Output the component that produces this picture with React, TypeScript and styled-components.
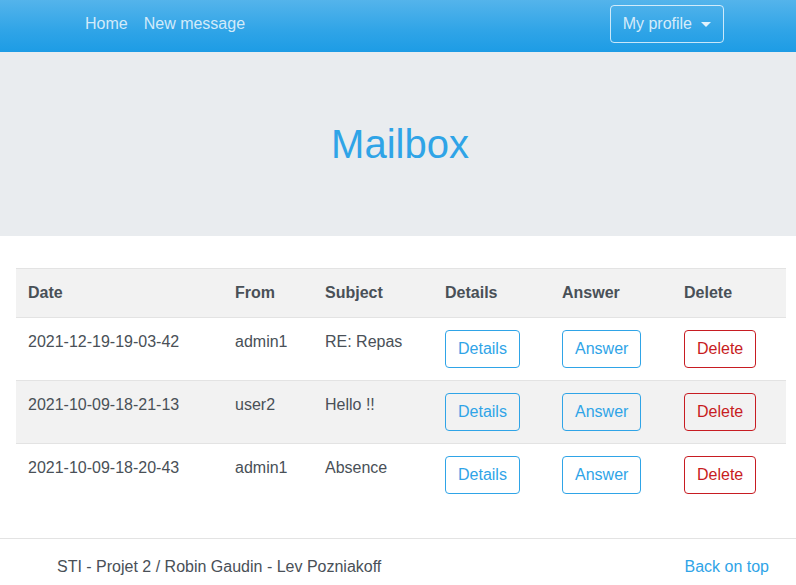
import React from "react";
import styled, { createGlobalStyle } from "styled-components";

const GlobalStyle = createGlobalStyle`
  * { box-sizing: border-box; }
  body {
    margin: 0;
    font-family: "Liberation Sans", Arial, sans-serif;
    font-size: 16px;
    line-height: 1.5;
    color: #495057;
    background: #fff;
  }
`;

const NavBar = styled.nav`
  height: 52px;
  display: flex;
  align-items: center;
  justify-content: space-between;
  padding: 0 72px 4px 77px;
  background-image: linear-gradient(#54b4eb, #2fa4e7 60%, #1d9ce5);
`;

const NavLinks = styled.div`
  display: flex;
`;

const NavLink = styled.a`
  padding: 8px;
  color: rgba(255, 255, 255, 0.78);
  text-decoration: none;
  line-height: 24px;
`;

const ProfileButton = styled.button`
  display: flex;
  align-items: center;
  height: 38px;
  padding: 6px 12px;
  font: inherit;
  color: rgba(255, 255, 255, 0.8);
  background: transparent;
  border: 1px solid rgba(255, 255, 255, 0.75);
  border-radius: 4px;
  &::after {
    content: "";
    margin-left: 9px;
    border-top: 5px solid rgba(255, 255, 255, 0.85);
    border-left: 5px solid transparent;
    border-right: 5px solid transparent;
  }
`;

const Jumbotron = styled.header`
  height: 184px;
  padding-left: 4px;
  background: #e9ecef;
  display: flex;
  align-items: center;
  justify-content: center;
`;

const Title = styled.h1`
  margin: 0;
  font-size: 40px;
  font-weight: 400;
  color: #2fa4e7;
`;

const Main = styled.main`
  padding: 32px 10px 32px 16px;
`;

const Table = styled.table`
  width: 770px;
  border-collapse: collapse;
  table-layout: fixed;
`;

const Th = styled.th<{ $w: number }>`
  width: ${(p) => p.$w}px;
  padding: 12px;
  text-align: left;
  font-weight: 700;
  line-height: 24px;
  background: #f2f2f2;
  border-top: 1px solid #e3e3e3;
`;

const Row = styled.tr<{ $striped: boolean }>`
  background: ${(p) => (p.$striped ? "#f2f2f2" : "#fff")};
`;

const Td = styled.td`
  padding: 12px;
  vertical-align: top;
  line-height: 24px;
  border-top: 1px solid #e3e3e3;
`;

const OutlineButton = styled.button<{ $color: string }>`
  height: 38px;
  padding: 6px 12px;
  font: inherit;
  color: ${(p) => p.$color};
  background: transparent;
  border: 1px solid ${(p) => p.$color};
  border-radius: 4px;
`;

const Footer = styled.footer`
  border-top: 1px solid #e3e3e3;
  display: flex;
  justify-content: space-between;
  padding: 16px 27px 20px 57px;
  line-height: 24px;
`;

const BackLink = styled.a`
  color: #2fa4e7;
  text-decoration: none;
`;

const messages = [
  { date: "2021-12-19-19-03-42", from: "admin1", subject: "RE: Repas" },
  { date: "2021-10-09-18-21-13", from: "user2", subject: "Hello !!" },
  { date: "2021-10-09-18-20-43", from: "admin1", subject: "Absence" },
];

const columns: [string, number][] = [
  ["Date", 207],
  ["From", 90],
  ["Subject", 120],
  ["Details", 117],
  ["Answer", 122],
  ["Delete", 114],
];

const App: React.FC = () => {
  return (
    <>
      <GlobalStyle />
      <NavBar>
        <NavLinks>
          <NavLink href="#">Home</NavLink>
          <NavLink href="#">New message</NavLink>
        </NavLinks>
        <ProfileButton>My profile</ProfileButton>
      </NavBar>
      <Jumbotron>
        <Title>Mailbox</Title>
      </Jumbotron>
      <Main>
        <Table>
          <thead>
            <tr>
              {columns.map(([name, w]) => (
                <Th key={name} $w={w}>
                  {name}
                </Th>
              ))}
            </tr>
          </thead>
          <tbody>
            {messages.map((m, i) => (
              <Row key={m.date} $striped={i % 2 === 1}>
                <Td>{m.date}</Td>
                <Td>{m.from}</Td>
                <Td>{m.subject}</Td>
                <Td>
                  <OutlineButton $color="#2fa4e7">Details</OutlineButton>
                </Td>
                <Td>
                  <OutlineButton $color="#2fa4e7">Answer</OutlineButton>
                </Td>
                <Td>
                  <OutlineButton $color="#c71c22">Delete</OutlineButton>
                </Td>
              </Row>
            ))}
          </tbody>
        </Table>
      </Main>
      <Footer>
        <span>STI - Projet 2 / Robin Gaudin - Lev Pozniakoff</span>
        <BackLink href="#">Back on top</BackLink>
      </Footer>
    </>
  );
};

export default App;
